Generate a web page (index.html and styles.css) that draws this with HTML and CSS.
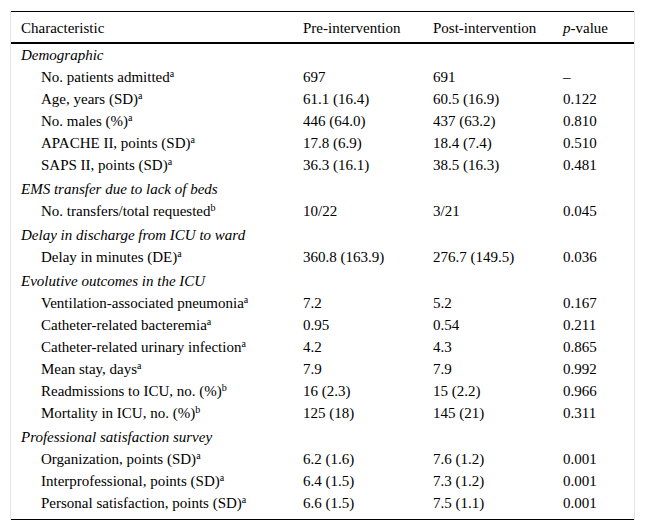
FILE: index.html
```html
<!DOCTYPE html>
<html>
<head>
<meta charset="utf-8">
<link rel="stylesheet" href="styles.css">
</head>
<body>
<div class="frame">
<table class="tbl">
<colgroup><col class="c1"><col class="c2"><col class="c3"><col class="c4"></colgroup>
<thead>
<tr><th>Characteristic</th><th>Pre-intervention</th><th>Post-intervention</th><th><i>p</i>-value</th></tr>
</thead>
<tbody>
<tr class="sec first"><td colspan="4">Demographic</td></tr>
<tr><td class="ind">No. patients admitted<sup>a</sup></td><td>697</td><td>691</td><td>–</td></tr>
<tr><td class="ind">Age, years (SD)<sup>a</sup></td><td>61.1 (16.4)</td><td>60.5 (16.9)</td><td>0.122</td></tr>
<tr><td class="ind">No. males (%)<sup>a</sup></td><td>446 (64.0)</td><td>437 (63.2)</td><td>0.810</td></tr>
<tr><td class="ind">APACHE II, points (SD)<sup>a</sup></td><td>17.8 (6.9)</td><td>18.4 (7.4)</td><td>0.510</td></tr>
<tr><td class="ind">SAPS II, points (SD)<sup>a</sup></td><td>36.3 (16.1)</td><td>38.5 (16.3)</td><td>0.481</td></tr>
<tr class="sec"><td colspan="4">EMS transfer due to lack of beds</td></tr>
<tr><td class="ind">No. transfers/total requested<sup>b</sup></td><td>10/22</td><td>3/21</td><td>0.045</td></tr>
<tr class="sec"><td colspan="4">Delay in discharge from ICU to ward</td></tr>
<tr><td class="ind">Delay in minutes (DE)<sup>a</sup></td><td>360.8 (163.9)</td><td>276.7 (149.5)</td><td>0.036</td></tr>
<tr class="sec"><td colspan="4">Evolutive outcomes in the ICU</td></tr>
<tr><td class="ind">Ventilation-associated pneumonia<sup>a</sup></td><td>7.2</td><td>5.2</td><td>0.167</td></tr>
<tr><td class="ind">Catheter-related bacteremia<sup>a</sup></td><td>0.95</td><td>0.54</td><td>0.211</td></tr>
<tr><td class="ind">Catheter-related urinary infection<sup>a</sup></td><td>4.2</td><td>4.3</td><td>0.865</td></tr>
<tr><td class="ind">Mean stay, days<sup>a</sup></td><td>7.9</td><td>7.9</td><td>0.992</td></tr>
<tr><td class="ind">Readmissions to ICU, no. (%)<sup>b</sup></td><td>16 (2.3)</td><td>15 (2.2)</td><td>0.966</td></tr>
<tr><td class="ind">Mortality in ICU, no. (%)<sup>b</sup></td><td>125 (18)</td><td>145 (21)</td><td>0.311</td></tr>
<tr class="sec"><td colspan="4">Professional satisfaction survey</td></tr>
<tr><td class="ind">Organization, points (SD)<sup>a</sup></td><td>6.2 (1.6)</td><td>7.6 (1.2)</td><td>0.001</td></tr>
<tr><td class="ind">Interprofessional, points (SD)<sup>a</sup></td><td>6.4 (1.5)</td><td>7.3 (1.2)</td><td>0.001</td></tr>
<tr class="last"><td class="ind">Personal satisfaction, points (SD)<sup>a</sup></td><td>6.6 (1.5)</td><td>7.5 (1.1)</td><td>0.001</td></tr>
</tbody>
</table>
</div>
</body>
</html>
```

FILE: styles.css
```css
html, body {
  margin: 0;
  padding: 0;
  background: #ffffff;
}
.frame {
  margin: 11px 0 0 10px;
  width: 623px;
  border-left: 1px solid #e3e3e3;
  border-right: 1px solid #e3e3e3;
}
.tbl {
  width: 100%;
  border-collapse: collapse;
  table-layout: fixed;
  font-family: "Liberation Serif", "Times New Roman", serif;
  font-size: 15px;
  line-height: 22px;
  color: #000;
}
.c1 { width: 292px; }
.c2 { width: 130px; }
.c3 { width: 130px; }
.c4 { width: auto; }
.tbl th {
  font-weight: normal;
  text-align: left;
  padding: 5px 0 3px 0;
  border-top: 1px solid #000;
  border-bottom: 2px solid #000;
  white-space: nowrap;
}
.tbl th:first-child { padding-left: 10px; }
.tbl td {
  padding: 0;
  white-space: nowrap;
  vertical-align: top;
}
.tbl td:first-child { padding-left: 10px; }
.tbl td.ind { padding-left: 30px; }
.sec td {
  font-style: italic;
  padding-top: 2px;
}
.sec.first td { padding-top: 0; }
.last td {
  padding-bottom: 5px;
  border-bottom: 1px solid #000;
}
sup {
  font-family: "Liberation Serif", "Times New Roman", serif;
  font-size: 10px;
  line-height: 0;
  vertical-align: 5px;
}
```
